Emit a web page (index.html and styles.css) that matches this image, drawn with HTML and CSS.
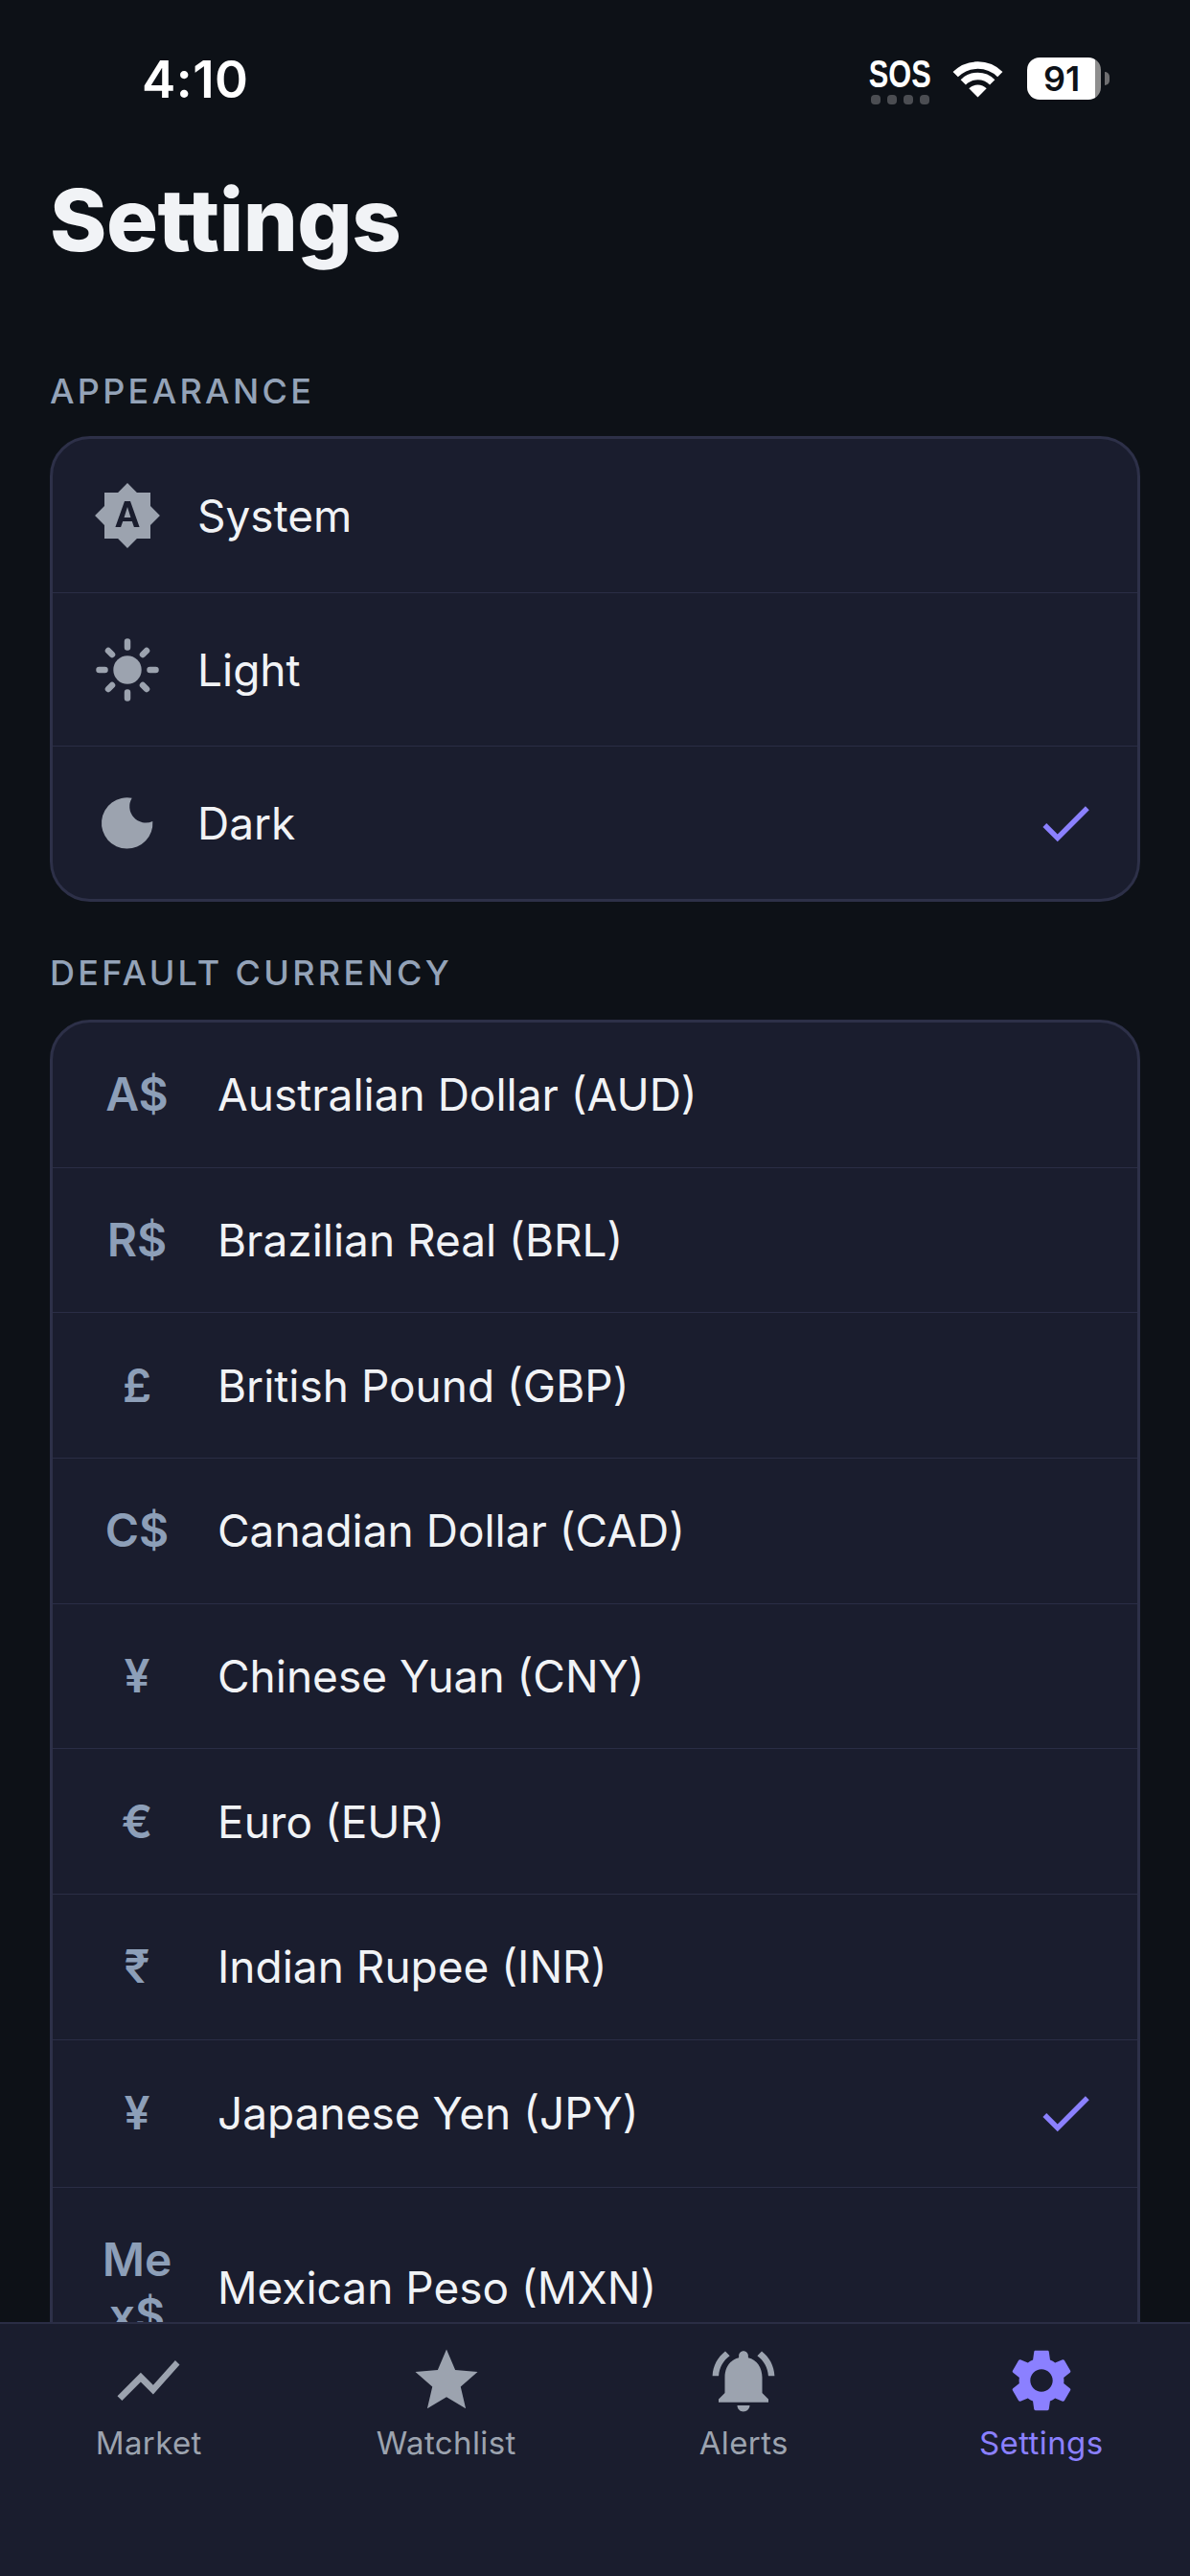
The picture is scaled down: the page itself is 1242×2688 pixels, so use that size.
FILE: index.html
```html
<!DOCTYPE html>
<html lang="en">
<head>
<meta charset="utf-8">
<title>Settings</title>
<link rel="stylesheet" href="styles.css">
</head>
<body>
<div class="app">
  <main class="scroll">
    <div class="status">
      <span class="time">4:10</span>
      <div class="status-right">
        <div class="sos"><span class="sos-text">SOS</span><div class="sos-dots"><i></i><i></i><i></i><i></i></div></div>
        <svg class="wifi" viewBox="0 0 53 39"><path d="M3.2 14.7A33 33 0 0 1 49.8 14.7" fill="none" stroke="#fff" stroke-width="7.5"/><path d="M11.3 22.8A21.5 21.5 0 0 1 41.7 22.8" fill="none" stroke="#fff" stroke-width="7.5"/><path d="M26.5 38.5L17.3 29.3A13 13 0 0 1 35.7 29.3Z" fill="#fff"/></svg>
        <div class="battery"><div class="battery-body"><span>91</span></div><i class="battery-nub"></i></div>
      </div>
    </div>
    <h1 class="title">Settings</h1>

    <h2 class="section-label">APPEARANCE</h2>
    <section class="card">
      <div class="row row-theme">
        <svg class="theme-icon" viewBox="0 0 24 24"><path d="M10.85 12.65h2.3L12 9l-1.15 3.65zM20 8.69V4h-4.69L12 .69 8.69 4H4v4.69L.69 12 4 15.31V20h4.69L12 23.31 15.31 20H20v-4.69L23.31 12 20 8.69zM14.3 16l-.7-2h-3.2l-.7 2H7.8L11 7h2l3.2 9h-1.9z"/></svg>
        <span class="row-text">System</span>
      </div>
      <div class="row row-theme">
        <svg class="theme-icon" viewBox="-36 -36 72 72"><circle r="14.7"/><g class="rays"><path d="M0-23.5v-6M0 23.5v6M-29.5 0h6M23.5 0h6M-20-20l4 4M20-20l-4 4M-20 20l4-4M20 20l-4-4"/></g></svg>
        <span class="row-text">Light</span>
      </div>
      <div class="row row-theme">
        <svg class="theme-icon" viewBox="-36 -36 72 72"><path d="M4.7-26.3A26.7 26.7 0 1 0 26.3-2A17 17 0 0 1 4.7-26.3Z"/></svg>
        <span class="row-text">Dark</span>
        <svg class="check" viewBox="0 0 24 24"><path d="M9 16.17L4.83 12l-1.41 1.41L9 19 21 7l-1.41-1.41z"/></svg>
      </div>
    </section>

    <h2 class="section-label">DEFAULT CURRENCY</h2>
    <section class="card card-open">
      <div class="row"><span class="symbol">A$</span><span class="row-text">Australian Dollar (AUD)</span></div>
      <div class="row"><span class="symbol">R$</span><span class="row-text">Brazilian Real (BRL)</span></div>
      <div class="row"><span class="symbol">£</span><span class="row-text">British Pound (GBP)</span></div>
      <div class="row"><span class="symbol">C$</span><span class="row-text">Canadian Dollar (CAD)</span></div>
      <div class="row"><span class="symbol">¥</span><span class="row-text">Chinese Yuan (CNY)</span></div>
      <div class="row"><span class="symbol">€</span><span class="row-text">Euro (EUR)</span></div>
      <div class="row"><span class="symbol">₹</span><span class="row-text">Indian Rupee (INR)</span></div>
      <div class="row"><span class="symbol">¥</span><span class="row-text">Japanese Yen (JPY)</span><svg class="check" viewBox="0 0 24 24"><path d="M9 16.17L4.83 12l-1.41 1.41L9 19 21 7l-1.41-1.41z"/></svg></div>
      <div class="row"><span class="symbol">Mex$</span><span class="row-text">Mexican Peso (MXN)</span></div>
    </section>
  </main>

  <nav class="tabbar">
    <div class="tab">
      <svg class="tab-icon" viewBox="0 0 24 24"><path d="M3.5 18.49l6-6.01 4 4L22 6.92l-1.41-1.41-7.09 7.97-4-4L2 16.99z"/></svg>
      <span class="tab-label">Market</span>
    </div>
    <div class="tab">
      <svg class="tab-icon" viewBox="0 0 24 24"><path d="M12 17.27L18.18 21l-1.64-7.03L22 9.24l-7.19-.61L12 2 9.19 8.63 2 9.24l5.46 4.73L5.82 21z"/></svg>
      <span class="tab-label">Watchlist</span>
    </div>
    <div class="tab">
      <svg class="tab-icon" viewBox="0 0 24 24"><path d="M7.58 4.08L6.15 2.65C3.75 4.48 2.17 7.3 2.03 10.5h2c.15-2.65 1.51-4.97 3.55-6.42zm12.39 6.42h2c-.15-3.2-1.73-6.02-4.12-7.85l-1.42 1.43c2.02 1.45 3.39 3.77 3.54 6.42zM18 11c0-3.07-1.64-5.64-4.5-6.32V4c0-.83-.67-1.5-1.5-1.5s-1.5.67-1.5 1.5v.68C7.63 5.36 6 7.92 6 11v5l-2 2v1h16v-1l-2-2v-5zm-6 11c.14 0 .27-.01.4-.04.65-.14 1.18-.58 1.44-1.18.1-.24.15-.5.15-.78h-4c.01 1.1.9 2 2.01 2z"/></svg>
      <span class="tab-label">Alerts</span>
    </div>
    <div class="tab tab-active">
      <svg class="tab-icon" viewBox="0 0 24 24"><path d="M19.14 12.94c.04-.3.06-.61.06-.94 0-.32-.02-.64-.07-.94l2.03-1.58c.18-.14.23-.41.12-.61l-1.92-3.32c-.12-.22-.37-.29-.59-.22l-2.39.96c-.5-.38-1.03-.7-1.62-.94l-.36-2.54c-.04-.24-.24-.41-.48-.41h-3.84c-.24 0-.43.17-.47.41l-.36 2.54c-.59.24-1.13.57-1.62.94l-2.39-.96c-.22-.08-.47 0-.59.22L2.74 8.87c-.12.21-.08.47.12.61l2.03 1.58c-.05.3-.09.63-.09.94s.02.64.07.94l-2.03 1.58c-.18.14-.23.41-.12.61l1.92 3.32c.12.22.37.29.59.22l2.39-.96c.5.38 1.03.7 1.62.94l.36 2.54c.05.24.24.41.48.41h3.84c.24 0 .44-.17.47-.41l.36-2.54c.59-.24 1.13-.56 1.62-.94l2.39.96c.22.08.47 0 .59-.22l1.92-3.32c.12-.22.07-.47-.12-.61l-2.01-1.58zM12 15.6c-1.98 0-3.6-1.62-3.6-3.6s1.62-3.6 3.6-3.6 3.6 1.62 3.6 3.6-1.62 3.6-3.6 3.6z"/></svg>
      <span class="tab-label">Settings</span>
    </div>
  </nav>
</div>
</body>
</html>
```
FILE: styles.css
```css
* { box-sizing: border-box; }
html, body { margin: 0; padding: 0; background: #0d1117; }
body { font-family: Inter, "Liberation Sans", sans-serif; }

.app {
  width: 1242px;
  height: 2688px;
  display: flex;
  flex-direction: column;
  overflow: hidden;
  background: #0d1117;
}

.scroll {
  flex: 1;
  min-height: 0;
  overflow: hidden;
  padding: 0 52px;
}

/* status bar */
.status {
  height: 176px;
  margin: 0 -52px;
  padding: 51px 84px 0 148px;
  display: flex;
  justify-content: space-between;
  align-items: flex-start;
}
.time {
  font-size: 53px;
  line-height: 64px;
  font-weight: 600;
  letter-spacing: 0.5px;
  color: #fff;
}
.status-right {
  display: flex;
  align-items: flex-start;
  padding-top: 9px;
}
.sos {
  width: 66px;
  margin-right: 22px;
  padding-top: 1px;
  display: flex;
  flex-direction: column;
  align-items: center;
}
.sos-text {
  font-family: "Liberation Sans", sans-serif;
  font-weight: 700;
  font-size: 40px;
  line-height: 32px;
  color: #fff;
  white-space: nowrap;
  transform: scaleX(0.77);
}
.sos-dots {
  display: flex;
  gap: 7px;
  margin-top: 6px;
}
.sos-dots i {
  width: 10px;
  height: 10px;
  border-radius: 4px;
  background: #4b4d52;
}
.wifi {
  width: 53px;
  height: 39px;
  margin: 3px 25px 0 0;
}
.battery {
  display: flex;
  align-items: center;
}
.battery-body {
  width: 77px;
  height: 44px;
  border-radius: 13px;
  background: linear-gradient(to right, #fff 92%, #8e8e8e 92%);
  display: flex;
  align-items: center;
  padding-left: 17px;
}
.battery-body span {
  font-size: 36px;
  line-height: 44px;
  font-weight: 600;
  color: #0d1117;
}
.battery-nub {
  width: 5px;
  height: 14px;
  margin-left: 4px;
  border-radius: 0 7px 7px 0;
  background: #6e6e70;
}

.title {
  margin: 0;
  font-size: 90px;
  line-height: 108px;
  font-weight: 800;
  letter-spacing: -0.5px;
  color: #f1f3f6;
}

.section-label {
  margin: 0;
  padding-top: 102px;
  height: 171px;
  font-size: 36px;
  line-height: 44px;
  font-weight: 500;
  letter-spacing: 3.3px;
  color: #94a3b8;
}

.card {
  background: #1a1d2e;
  border: 3px solid #2d3048;
  border-radius: 42px;
  overflow: hidden;
}
.card + .section-label {
  padding-top: 52px;
  height: 123px;
}

.row {
  display: flex;
  align-items: center;
  padding: 46.35px 42px;
  border-top: 1px solid #2a2d45;
}
.row:first-child { border-top: 0; }
.row-theme {
  height: 160px;
  padding-top: 0;
  padding-bottom: 0;
}

.theme-icon {
  width: 72px;
  height: 72px;
  margin-right: 37px;
  flex: none;
  fill: #9ca3af;
}
.rays path {
  fill: none;
  stroke: #9ca3af;
  stroke-width: 6.5;
  stroke-linecap: round;
}
.row-text {
  flex: 1;
  font-size: 46px;
  line-height: 58px;
  color: #f1f3f6;
}
.symbol {
  width: 92px;
  margin-right: 38px;
  flex: none;
  text-align: center;
  font-size: 48px;
  line-height: 58px;
  font-weight: 600;
  color: #8d9fb8;
  overflow-wrap: anywhere;
}
.check {
  width: 66px;
  height: 66px;
  margin: -2.75px 0;
  flex: none;
  fill: #8b80ff;
}

/* tab bar */
.tabbar {
  height: 265px;
  flex: none;
  display: flex;
  background: #1a1d2e;
  border-top: 2px solid #2a2d45;
  padding-top: 20px;
}
.tab {
  flex: 1;
  display: flex;
  flex-direction: column;
  align-items: center;
  color: #9ca3af;
}
.tab-icon {
  width: 78px;
  height: 78px;
  fill: currentColor;
}
.tab-label {
  margin-top: 6px;
  font-size: 33px;
  line-height: 40px;
  font-weight: 400;
  letter-spacing: 0.4px;
}
.tab-active { color: #8b80ff; }
```
